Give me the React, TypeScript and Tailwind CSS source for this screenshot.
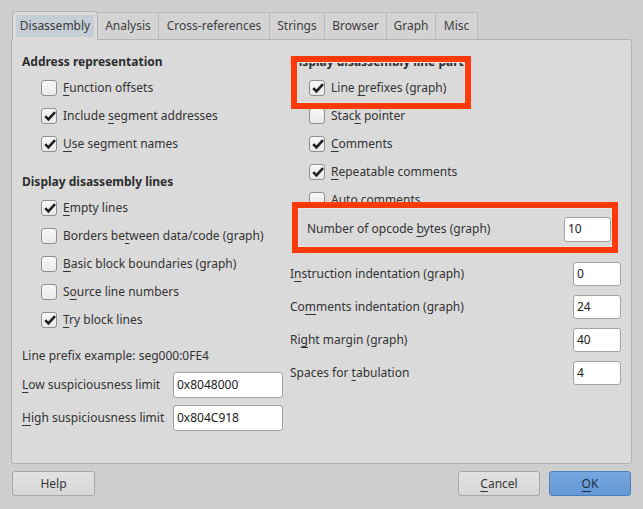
import React from "react";

const font = { fontFamily: '"Noto Sans", "Open Sans", sans-serif' };

function M({ t, u }: { t: string; u?: number }) {
  if (u === undefined || u < 0) return <>{t}</>;
  return (
    <>
      {t.slice(0, u)}
      <span className="underline decoration-1 underline-offset-[3px]">{t[u]}</span>
      {t.slice(u + 1)}
    </>
  );
}

function Box({ checked }: { checked?: boolean }) {
  return (
    <span className="relative flex h-[16px] w-[16px] shrink-0 items-center justify-center rounded-[3px] border border-[#8f8f8f] bg-gradient-to-b from-[#f7f7f7] to-[#e9e9e9]">
      {checked && (
        <svg width="14" height="14" viewBox="0 0 14 14" className="absolute left-[1px] top-[0px]">
          <path d="M2.2 7.2 L5.4 10.4 L12 3.2" fill="none" stroke="#1f2224" strokeWidth="2.6" strokeLinecap="butt" strokeLinejoin="miter" />
        </svg>
      )}
    </span>
  );
}

function Check({ t, u, checked }: { t: string; u?: number; checked?: boolean }) {
  return (
    <div className="flex h-[28px] items-center gap-[6px] whitespace-nowrap pl-[19px]">
      <Box checked={checked} />
      <span className="leading-[16px]">
        <M t={t} u={u} />
      </span>
    </div>
  );
}

function Input({ v, w }: { v: string; w: string }) {
  return (
    <div className={`flex h-full shrink-0 items-center rounded-[3px] border border-[#a3a3a3] bg-white pl-[3px] text-[#222] ${w}`}>
      {v}
    </div>
  );
}

function Tab({ t, active, w }: { t: string; active?: boolean; w: string }) {
  if (active) {
    return (
      <div className={`relative z-10 -mb-px flex h-[29px] items-center justify-center rounded-t-[3px] border border-b-0 border-[#b3b3b3] bg-[#dadada] px-[3px] pt-[3px] pb-[3px] ${w}`}>
        <div className="flex h-full w-full items-center justify-center bg-[#c5cdd6] text-[#3a3a3a]">{t}</div>
      </div>
    );
  }
  return (
    <div className={`flex h-[27px] items-center justify-center border border-l-0 border-b-0 border-[#bcbcbc] bg-[#d3d3d3] text-[#404040] ${w}`}>
      {t}
    </div>
  );
}

function Btn({ children, primary, w = "w-[82px]" }: { children: React.ReactNode; primary?: boolean; w?: string }) {
  return primary ? (
    <div className={`flex h-[25px] items-center justify-center rounded-[3px] border border-[#4a7fbf] bg-gradient-to-b from-[#74a7de] to-[#6598d3] text-[#1f2f40] ${w}`}>
      {children}
    </div>
  ) : (
    <div className={`flex h-[25px] items-center justify-center rounded-[3px] border border-[#a8a8a8] bg-gradient-to-b from-[#e2e2e2] to-[#d6d6d6] text-[#363636] ${w}`}>
      {children}
    </div>
  );
}

function FormRow({ t, u, v, hidden }: { t: string; u?: number; v: string; hidden?: boolean }) {
  return (
    <div className={`flex h-[24px] items-center justify-between whitespace-nowrap ${hidden ? "invisible" : ""}`}>
      <span>
        <M t={t} u={u} />
      </span>
      <Input v={v} w="w-[48px]" />
    </div>
  );
}

export default function App() {
  return (
    <div style={font} className="relative flex h-[509px] w-[643px] flex-col bg-[#cecece] pl-[11px] pr-[11px] pt-[11px] text-[12px] text-[#333]">
      {/* tabs */}
      <div className="flex items-end pl-[1px]">
        <Tab t="Disassembly" active w="w-[86px]" />
        <Tab t="Analysis" w="w-[61px]" />
        <Tab t="Cross-references" w="w-[111px]" />
        <Tab t="Strings" w="w-[55px]" />
        <Tab t="Browser" w="w-[62px]" />
        <Tab t="Graph" w="w-[49px]" />
        <Tab t="Misc" w="w-[42px]" />
      </div>
      {/* panel */}
      <div className="flex h-[425px] w-[621px] rounded-[3px] rounded-tl-none border border-[#b3b3b3] bg-[#dadada]">
        {/* left column */}
        <div className="flex w-[274px] shrink-0 flex-col pl-[10px] pt-[12px]">
          <div className="h-[20px] whitespace-nowrap font-bold leading-[20px] text-[#2e2e2e]">Address representation</div>
          <div className="mt-[2px]">
            <Check t="Function offsets" u={0} />
            <Check t="Include segment addresses" u={8} checked />
            <Check t="Use segment names" u={0} checked />
          </div>
          <div className="mt-[14px] h-[20px] whitespace-nowrap font-bold leading-[20px] text-[#2e2e2e]">Display disassembly lines</div>
          <div className="mt-[2px]">
            <Check t="Empty lines" u={0} checked />
            <Check t="Borders between data/code (graph)" u={10} />
            <Check t="Basic block boundaries (graph)" u={0} />
            <Check t="Source line numbers" u={1} />
            <Check t="Try block lines" u={0} checked />
          </div>
          <div className="mt-[12px] h-[20px] whitespace-nowrap leading-[20px]">Line prefix example: seg000:0FE4</div>
          <div className="mt-[6px] flex h-[26px] items-center whitespace-nowrap">
            <span className="w-[151px] shrink-0">
              <M t="Low suspiciousness limit" u={0} />
            </span>
            <Input v="0x8048000" w="w-[110px]" />
          </div>
          <div className="mt-[7px] flex h-[26px] items-center whitespace-nowrap">
            <span className="w-[151px] shrink-0">
              <M t="High suspiciousness limit" u={0} />
            </span>
            <Input v="0x804C918" w="w-[110px]" />
          </div>
        </div>
        {/* right column */}
        <div className="flex flex-1 flex-col pl-[4px] pr-[10px] pt-[12px]">
          <div className="h-[20px] whitespace-nowrap font-bold leading-[20px] text-[#2e2e2e]">Display disassembly line part</div>
          <div className="mt-[2px]">
            <Check t="Line prefixes (graph)" u={5} checked />
            <Check t="Stack pointer" u={4} />
            <Check t="Comments" u={0} checked />
            <Check t="Repeatable comments" u={0} checked />
            <Check t="Auto comments" u={0} />
          </div>
          <div className="mt-[15px] flex flex-col gap-[9px]">
            <FormRow t="Number of opcode bytes (graph)" u={17} v="10" hidden />
            <FormRow t="Instruction indentation (graph)" u={1} v="0" />
            <FormRow t="Comments indentation (graph)" u={2} v="24" />
            <FormRow t="Right margin (graph)" u={2} v="40" />
            <FormRow t="Spaces for tabulation" u={11} v="4" />
          </div>
        </div>
      </div>
      {/* buttons */}
      <div className="mt-[7px] flex items-center pl-[1px] pr-[1px]">
        <Btn w="w-[83px]">Help</Btn>
        <div className="flex-1" />
        <div className="flex gap-[9px]">
          <Btn>
            <M t="Cancel" u={0} />
          </Btn>
          <Btn primary>
            <M t="OK" u={0} />
          </Btn>
        </div>
      </div>

      {/* red highlight overlays */}
      <div className="absolute left-[291px] top-[56px] h-[53px] w-[180px] border-[6px] border-[#ff3a0a] shadow-[inset_0_0_0_1px_#e6e6e6]" />
      <div className="absolute left-[292px] top-[202px] flex h-[51px] w-[326px] items-center border-[6px] border-[#ff3a0a] bg-[#dadada] shadow-[inset_0_0_0_1px_#e6e6e6]">
        <div className="flex w-full items-center justify-between whitespace-nowrap pl-[9px] pr-[1px] pt-[3px]">
          <span>
            <M t="Number of opcode bytes (graph)" u={17} />
          </span>
          <div className="h-[25px]">
            <Input v="10" w="w-[47px]" />
          </div>
        </div>
      </div>
    </div>
  );
}
